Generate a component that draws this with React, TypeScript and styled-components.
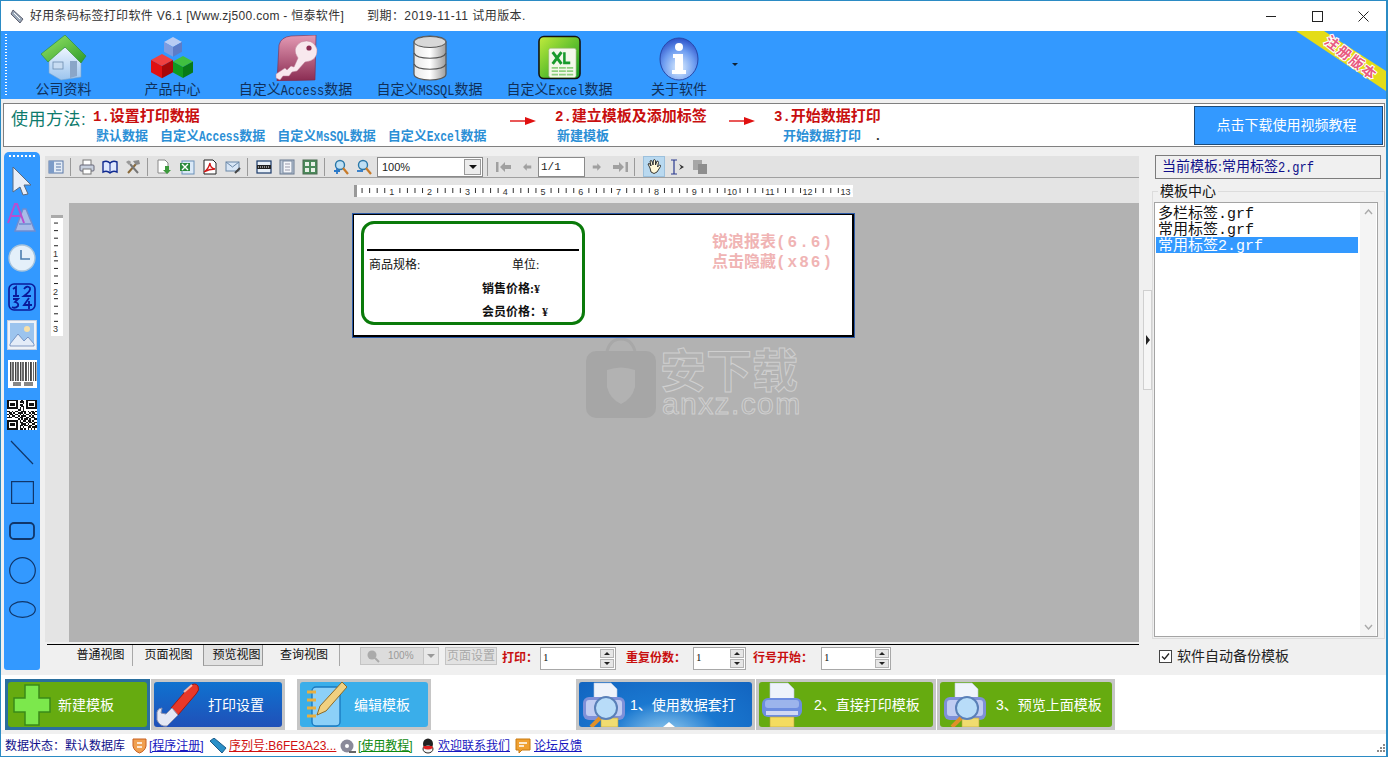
import React from "react";
import styled, { createGlobalStyle } from "styled-components";

const Global = createGlobalStyle`
  html, body { margin: 0; padding: 0; overflow: hidden; background: #fff; }
  * { box-sizing: border-box; }
  body { font-family: "Noto Sans CJK SC", "Noto Sans", sans-serif; }
`;
const CJK = `"Liberation Serif", "Noto Sans CJK SC", serif`;
const Sans = `"Liberation Sans", "Noto Sans CJK SC", sans-serif`;

const Win = styled.div`
  width: 1388px; height: 757px; display: flex; flex-direction: column;
  border: 1px solid #2b8bc4; border-right-width: 2px; background: #f0f0f0; overflow: hidden;
`;
const TitleBar = styled.div`
  height: 30px; flex: none; display: flex; align-items: center; background: #fff;
  padding-left: 9px; font: 12px/16px ${Sans}; color: #333; white-space: pre;
`;
const TitleIcon = styled.svg`width: 15px; height: 15px; margin-right: 5px; flex: none;`;
const TitleText = styled.span`width: 337px; flex: none; letter-spacing: 0.3px;`;
const TitleExpiry = styled.span`letter-spacing: 0.45px;`;
const WinControls = styled.div`margin-left: auto; display: flex; height: 30px;`;
const WinBtn = styled.div`width: 46px; display: flex; align-items: center; justify-content: center;`;

const TopBar = styled.div`
  height: 68px; flex: none; background: #3399ff; position: relative; display: flex; align-items: flex-start;
  padding-left: 2px;
`;
const Grip = styled.div`
  width: 2px; height: 62px; margin: 3px 0 0 2px; flex: none;
  background: repeating-linear-gradient(to bottom, #fff 0 1px, transparent 1px 3px);
`;
const TopItem = styled.div<{ $w: number }>`
  width: ${(p) => p.$w}px; flex: none; height: 68px; display: flex; flex-direction: column; align-items: center;
  font: 14px/16px ${CJK}; color: #10305a; white-space: nowrap; padding-top: 3px;
`;
const TopIconBox = styled.div`height: 47px; display: flex; align-items: flex-end; justify-content: center;`;
const TopLabel = styled.div`margin-top: 1px;`;
const DropArrow = styled.div`
  margin: 32px 0 0 0; width: 0; height: 0; flex: none;
  border-left: 3px solid transparent; border-right: 3px solid transparent; border-top: 3px solid #123;
`;
const Ribbon = styled.svg`position: absolute; right: 0; top: 0; width: 90px; height: 68px;`;

const HelpWrap = styled.div`height: 51px; flex: none; padding: 4px 1px 3px 2px;`;
const HelpBox = styled.div`
  height: 44px; border: 1px solid #808080; background: #fff; display: flex; position: relative; padding-right: 1px;
`;
const HelpTitle = styled.div`
  width: 89px; flex: none; padding: 5px 0 0 7px; font: 17px/22px ${Sans}; color: #0d7a6c; letter-spacing: 0.5px; white-space: nowrap;
`;
const Step = styled.div<{ $w: number }>`width: ${(p) => p.$w}px; flex: none; display: flex; flex-direction: column; padding-top: 3px;`;
const StepHead = styled.div`font: bold 15px/18px ${CJK}; color: #c80f0f; white-space: nowrap; height: 18px;`;
const StepNum = styled.span`font-family: "Liberation Mono", monospace; font-size: 14px;`;
const StepLinks = styled.div<{ $pl: number }>`
  display: flex; gap: 12px; padding-left: ${(p) => p.$pl}px; margin-top: 3px; height: 16px;
  font: bold 13px/16px ${CJK}; color: #2b8fd6; white-space: nowrap;
`;
const Arrow = styled.svg<{ $w: number }>`width: ${(p) => p.$w}px; height: 44px; flex: none;`;
const VideoBtn = styled.div`
  margin: 2px 0 0 auto; width: 189px; height: 39px; background: #3399ff; border: 1px solid #1c4a78;
  color: #fff; font: 14px/37px ${Sans}; text-align: center; padding-right: 4px;
`;
const Dot = styled.b`color: #222;`;

const Main = styled.div`height: 525px; flex: none; display: flex; background: #f0f0f0; position: relative;`;
const LeftBar = styled.div`
  width: 36px; height: 518px; margin: 2px 0 0 3px; flex: none; background: #3399ff; border-radius: 5px 5px 3px 3px;
  display: flex; flex-direction: column; align-items: center; position: relative;
`;
const DotRow = styled.div`
  position: absolute; left: 5px; top: 3px; width: 26px; height: 2px;
  background: repeating-linear-gradient(to right, #fff 0 2px, transparent 2px 4px);
`;
const LeftIcon = styled.div<{ $h: number }>`
  height: ${(p) => p.$h}px; width: 36px; display: flex; align-items: center; justify-content: center; flex: none;
`;
const Center = styled.div`width: 1094px; margin-left: 5px; flex: none; display: flex; flex-direction: column; padding-top: 6px;`;
const ToolRow = styled.div`
  height: 22px; flex: none; background: #e2e2e2; border-bottom: 1px solid #a0a0a0; display: flex; align-items: center; padding-left: 3px;
`;
const Tool = styled.div<{ $w?: number; $mr?: number }>`
  width: ${(p) => p.$w ?? 16}px; margin-right: ${(p) => p.$mr ?? 7}px; height: 16px; flex: none; display: flex; align-items: center; justify-content: center;
`;
const ToolSep = styled.div`width: 1px; height: 18px; background: #9a9a9a; flex: none; margin-right: 8px;`;
const Combo = styled.div`
  width: 106px; height: 20px; flex: none; background: #fff; border: 1px solid #8a8a8a; display: flex; align-items: center;
  justify-content: space-between; font: 11px/16px ${Sans}; color: #222; padding: 0 1px 0 4px; margin-right: 4px;
`;
const ComboBtn = styled.div`
  width: 17px; height: 16px; background: #ececec; border: 1px solid #999; display: flex; align-items: center; justify-content: center;
`;
const Tri = styled.div`width: 0; height: 0; border-left: 4px solid transparent; border-right: 4px solid transparent; border-top: 4px solid #111;`;
const PageInput = styled.div`
  width: 47px; height: 20px; background: #fff; border: 1px solid #8a8a8a; font: 11px/18px "Liberation Mono", monospace; color: #222; padding-left: 2px; flex: none; margin-right: 7px;
`;
const HandBtn = styled.div`
  width: 22px; height: 21px; background: #b9d9f0; border: 1px solid #9cc0dc; flex: none; margin-right: 4px; display: flex; align-items: center; justify-content: center;
`;
const RulerRow = styled.div`height: 25px; flex: none; background: #e4e4e4; padding: 7px 0 0 309px;`;
const RulerH = styled.svg`width: 499px; height: 12px; display: block; background: #fff;`;
const CanvasRow = styled.div`height: 439px; flex: none; display: flex;`;
const RulerCol = styled.div`width: 24px; flex: none; background: #e4e4e4; padding: 12px 0 0 6px;`;
const RulerV = styled.svg`width: 12px; height: 121px; display: block; background: #fff;`;
const Canvas = styled.div`flex: 1; background: #b2b2b2; position: relative;`;
const Paper = styled.div`
  position: absolute; left: 284px; top: 11px; width: 501px; height: 123px; background: #fff;
  border: 2px solid #000; border-left-width: 1px; border-top-width: 1px; outline: 1px solid #2b5aa8;
`;
const LabelBox = styled.div`
  position: absolute; left: 7px; top: 6px; width: 224px; height: 104px; border: 3px solid #0a7a0a; border-radius: 13px;
`;
const LabelRule = styled.div`position: absolute; left: 3px; top: 25px; width: 212px; height: 2px; background: #000;`;
const LabelText = styled.div<{ $x: number; $y: number; $b?: boolean }>`
  position: absolute; left: ${(p) => p.$x}px; top: ${(p) => p.$y}px; font: ${(p) => (p.$b ? "bold" : "normal")} 12px/16px ${CJK};
  color: #111; white-space: nowrap;
`;
const PinkNote = styled.div`
  position: absolute; left: 358px; top: 15px; font: bold 16px/20px "Noto Sans CJK SC", sans-serif; color: #f0b4b4; white-space: nowrap;
`;
const PinkLine = styled.div`height: 20px;`;
const PinkLat = styled.span`font-family: "Liberation Mono", monospace; letter-spacing: 2px; line-height: 1;`;
const Mark = styled.div`position: absolute; left: 517px; top: 134px; display: flex; gap: 4px;`;
const MarkText = styled.div`display: flex; flex-direction: column; padding-top: 6px;`;
const MarkCn = styled.div`
  font: bold 46px/48px "Noto Sans CJK SC", sans-serif; color: transparent; -webkit-text-stroke: 1px #cfcfcf; white-space: nowrap; height: 48px;
`;
const MarkEn = styled.div`
  font: 30px/26px "Liberation Sans", sans-serif; color: transparent; -webkit-text-stroke: 1px #cfcfcf; letter-spacing: 1.4px; margin-left: 2px;
`;
const BottomLine = styled.div`height: 1px; background: #000; margin: 2px 0 0 2px; flex: none;`;
const TabRow = styled.div`height: 26px; flex: none; display: flex; align-items: flex-start; padding-left: 2px;`;
const TabItem = styled.div<{ $w: number; $raised?: boolean; $sep?: boolean }>`
  width: ${(p) => p.$w}px; height: 21px; flex: none; text-align: center; font: 12px/21px ${Sans}; color: #111;
  background: ${(p) => (p.$raised ? "#e2e2e2" : "transparent")};
  border-right: 1px solid ${(p) => (p.$sep ? "#a8a8a8" : "transparent")};
  ${(p) => p.$sep && "padding-right: 3px;"}
  ${(p) => p.$raised && "border-left: 1px solid #999; border-right: 1px solid #999; border-bottom: 1px solid #aaa; padding-left: 7px;"}
`;
const TabSpacer = styled.div<{ $w: number }>`width: ${(p) => p.$w}px; flex: none;`;
const GhostCombo = styled.div`
  width: 79px; height: 18px; margin-top: 2px; flex: none; background: #dcdcdc; border: 1px solid #c4c4c4; display: flex; align-items: center;
  font: 10px/16px ${Sans}; color: #999; gap: 8px; padding-left: 5px;
`;
const GhostArrow = styled.div`
  margin-left: auto; width: 15px; height: 16px; background: #e8e8e8; border-left: 1px solid #c4c4c4; display: flex; align-items: center; justify-content: center;
`;
const GhostTri = styled.div`width: 0; height: 0; border-left: 4px solid transparent; border-right: 4px solid transparent; border-top: 4px solid #999;`;
const GhostBtn = styled.div`
  width: 52px; height: 18px; margin: 2px 5px 0 6px; flex: none; background: #e2e2e2; border: 1px solid #c4c4c4; font: 12px/16px ${Sans}; color: #aaa; text-align: center; white-space: nowrap; overflow: hidden;
`;
const RedLabel = styled.div<{ $w: number }>`
  width: ${(p) => p.$w}px; flex: none; margin-top: 4px; font: bold 12px/18px ${Sans}; color: #c80f0f; white-space: nowrap;
`;
const Spin = styled.div<{ $w: number }>`
  width: ${(p) => p.$w}px; height: 23px; margin-top: 2px; flex: none; background: #fff; border: 1px solid #a8a8a8; display: flex; justify-content: space-between;
  font: 11px/17px "Liberation Serif", serif; color: #111; padding: 1px 1px 1px 2px;
`;
const SpinBtns = styled.div`width: 14px; display: flex; flex-direction: column; gap: 1px; flex: none;`;
const SpinBtn = styled.div`flex: 1; background: #e6e6e6; border: 1px solid #b4b4b4; display: flex; align-items: center; justify-content: center;`;
const TriS = styled.div<{ $up?: boolean }>`
  width: 0; height: 0; border-left: 3px solid transparent; border-right: 3px solid transparent;
  ${(p) => (p.$up ? "border-bottom: 3px solid #222;" : "border-top: 3px solid #222;")}
`;

const Splitter = styled.div`
  width: 9px; height: 100px; margin: 140px 0 0 4px; flex: none; background: #f6f6f6; border: 1px solid #d0d0d0; display: flex; align-items: center; justify-content: center;
`;
const SplitTri = styled.div`width: 0; height: 0; border-top: 5px solid transparent; border-bottom: 5px solid transparent; border-left: 4px solid #222;`;
const Right = styled.div`width: 233px; flex: none; display: flex; flex-direction: column; padding: 5px 0 0 0;`;
const CurBox = styled.div`
  width: 226px; height: 24px; margin-left: 3px; border: 1px solid #7c7c7c; font: 14px/22px ${CJK}; color: #10108a; padding-left: 6px; flex: none; white-space: nowrap;
`;
const Group = styled.div`
  margin-top: 12px; width: 233px; height: 448px; border: 1px solid #dcdcdc; padding: 10px 6px 0 1px; position: relative; flex: none;
`;
const Legend = styled.div`
  position: absolute; left: 5px; top: -9px; background: #f0f0f0; padding: 0 2px; font: 14px/16px ${Sans}; color: #111;
`;
const ListBox = styled.div`
  width: 224px; height: 435px; background: #fff; border: 1px solid #a4a4a4; display: flex; padding-top: 2px;
`;
const ListCol = styled.div`width: 202px; flex: none; margin-left: 1px;`;
const ListItem = styled.div<{ $sel?: boolean }>`
  height: 16px; font: 15px/19px "Liberation Mono", "Noto Sans CJK SC", monospace; padding-left: 2px; color: ${(p) => (p.$sel ? "#fff" : "#111")};
  background: ${(p) => (p.$sel ? "#3399ff" : "transparent")}; white-space: nowrap;
`;
const ScrollTrack = styled.div`
  width: 16px; margin: -2px 1px 0 auto; background: #f4f4f4; display: flex; flex-direction: column; justify-content: space-between; align-items: center; padding: 6px 0;
`;
const Chevron = styled.svg`width: 9px; height: 6px; display: block;`;
const CheckRow = styled.div`
  display: flex; align-items: center; gap: 5px; margin: 8px 0 0 7px; font: 14px/18px ${Sans}; color: #222; flex: none;
`;
const CheckBox = styled.div`width: 13px; height: 13px; background: #fff; border: 1px solid #444; display: flex; align-items: center; justify-content: center;`;

const BtnRow = styled.div`height: 55px; flex: none; background: #fff; display: flex; padding: 4px 0 0 4px;`;
const BigBtn = styled.div<{ $w: number; $ml?: number; $sel?: boolean }>`
  width: ${(p) => p.$w}px; height: 51px; margin-left: ${(p) => p.$ml ?? 0}px; flex: none;
  background: ${(p) => (p.$sel ? "#2a6f9e" : "#c6c6c6")}; padding: 3px; display: flex;
`;
const BigFill = styled.div<{ $bg: string; $pl: number; $gap: number }>`
  flex: 1; background: ${(p) => p.$bg}; border-radius: 3px; display: flex; align-items: center; position: relative; overflow: hidden;
  padding-left: ${(p) => p.$pl}px; gap: ${(p) => p.$gap}px; color: #fff; font: 14px/18px ${Sans}; white-space: nowrap;
`;
const ActiveTick = styled.div`
  position: absolute; left: 50%; bottom: 0; margin-left: -3px; width: 0; height: 0;
  border-left: 6px solid transparent; border-right: 6px solid transparent; border-bottom: 5px solid #fff;
`;
const BigIcon = styled.svg<{ $w: number }>`width: ${(p) => p.$w}px; height: 45px; flex: none;`;
const Gap = styled.div`height: 4px; flex: none; background: #f0f0f0;`;
const Status = styled.div`
  height: 22px; flex: none; background: #fff; display: flex; align-items: center; font: 12px/16px ${Sans}; padding: 1px 0 0 4px; position: relative; white-space: nowrap;
`;
const StatusText = styled.span<{ $c: string; $u?: boolean; $w: number }>`
  color: ${(p) => p.$c}; text-decoration: ${(p) => (p.$u ? "underline" : "none")}; width: ${(p) => p.$w}px; flex: none;
`;
const StatusIcon = styled.svg<{ $w: number }>`width: ${(p) => p.$w}px; height: 16px; flex: none;`;
const ResizeGrip = styled.svg`position: absolute; right: 0; bottom: 1px; width: 12px; height: 12px;`;

const Lat = styled.span`
  font-family: "Liberation Mono", monospace; font-size: 0.86em; line-height: 1; display: inline-block; transform: scaleY(1.25);
`;

const HomeIcon = () => (
  <svg width="47" height="46" viewBox="0 0 47 46">
    <defs>
      <linearGradient id="wall" x1="0" y1="0" x2="0" y2="1"><stop offset="0" stopColor="#eef6ff" /><stop offset="1" stopColor="#9cc4ee" /></linearGradient>
      <linearGradient id="roof" x1="0" y1="0" x2="1" y2="1"><stop offset="0" stopColor="#9ae868" /><stop offset="1" stopColor="#2e9a2a" /></linearGradient>
    </defs>
    <path d="M9 20 L26 12 L41 20 L41 42 L21 45 L9 38Z" fill="url(#wall)" stroke="#7aa4cc" strokeWidth=".6" />
    <path d="M1 19 L25 0 L46 21 L41 28 L25 12 L8 27Z" fill="url(#roof)" stroke="#2a8a2a" strokeWidth=".6" />
    <path d="M30 26 h7 v15 l-7 2z" fill="#8aa6c8" />
    <rect x="13" y="27" width="10" height="7" fill="#c8dcf2" stroke="#6c8cb0" strokeWidth=".8" />
  </svg>
);
const Cube = ({ x, y, s, a, b, c }: { x: number; y: number; s: number; a: string; b: string; c: string }) => (
  <g transform={`translate(${x} ${y})`}>
    <path d={`M${s} 0 L${2 * s} ${s * 0.55} L${s} ${s * 1.1} L0 ${s * 0.55}Z`} fill={a} />
    <path d={`M0 ${s * 0.55} L${s} ${s * 1.1} V${s * 2.2} L0 ${s * 1.65}Z`} fill={b} />
    <path d={`M${2 * s} ${s * 0.55} L${s} ${s * 1.1} V${s * 2.2} L${2 * s} ${s * 1.65}Z`} fill={c} />
  </g>
);
const CubesIcon = () => (
  <svg width="44" height="44" viewBox="0 0 44 44">
    <Cube x={13} y={0} s={9} a="#b8ccf4" b="#7e9ce0" c="#5c7cc8" />
    <Cube x={0} y={17} s={11} a="#f04040" b="#e01010" c="#a80808" />
    <Cube x={22} y={19} s={10} a="#40c040" b="#109a20" c="#087a18" />
  </svg>
);
const AccessIcon = () => (
  <svg width="46" height="46" viewBox="0 0 46 46">
    <defs><linearGradient id="acc" x1="0" y1="0" x2="0" y2="1"><stop offset="0" stopColor="#e49ab4" /><stop offset="1" stopColor="#8a2c52" /></linearGradient></defs>
    <path d="M6 10 Q8 2 18 1 L43 0 L42 45 L4 46 Z" fill="url(#acc)" stroke="#7c2c4c" strokeWidth=".6" />
    <path d="M3 43 L3 39 L12 33 L14 35 L18 31 L21 32 L25 23 Q18 13 28 7 Q40 3 44 14 Q45 26 32 27 L24 36 L19 37 L16 41 L10 41 L7 45Z" fill="#f8e8ee" stroke="#b87a94" strokeWidth=".5" />
    <circle cx="36" cy="13" r="2.6" fill="#8a2c52" />
  </svg>
);
const DbIcon = () => (
  <svg width="36" height="46" viewBox="0 0 36 46">
    <defs><linearGradient id="db" x1="0" y1="0" x2="1" y2="0"><stop offset="0" stopColor="#e8e8e8" /><stop offset=".5" stopColor="#fff" /><stop offset="1" stopColor="#9c9c9c" /></linearGradient></defs>
    <path d="M2 7 C2 -1 34 -1 34 7 V39 C34 47 2 47 2 39Z" fill="url(#db)" stroke="#555" strokeWidth="1.2" />
    <ellipse cx="18" cy="7" rx="16" ry="5.5" fill="#d8d8d8" stroke="#555" />
    <path d="M2 18 C5 25 31 25 34 18 M2 29 C5 36 31 36 34 29" fill="none" stroke="#555" strokeWidth="1.2" />
  </svg>
);
const ExcelIcon = () => (
  <svg width="43" height="46" viewBox="0 0 44 46">
    <defs><linearGradient id="xl" x1="0" y1="0" x2="1" y2="1"><stop offset="0" stopColor="#c2ec3c" /><stop offset="1" stopColor="#0d9a20" /></linearGradient></defs>
    <rect x="1" y="1" width="42" height="43" rx="5" fill="url(#xl)" stroke="#111" strokeWidth="1.6" />
    <rect x="11" y="13" width="28" height="30" rx="2" fill="#f4f8ea" stroke="#98b078" strokeWidth=".6" />
    <path d="M15 17 L24 29 M24 17 L15 29" stroke="#199a2c" strokeWidth="3" />
    <path d="M27 17 V28 H33" stroke="#199a2c" strokeWidth="2.6" fill="none" />
    <path d="M14 33 H36 M14 36.5 H36 M14 40 H36" stroke="#8ed080" strokeWidth="1.8" />
    <path d="M21 31 V42 M29 31 V42" stroke="#f4f8ea" strokeWidth="1" />
  </svg>
);
const InfoIcon = () => (
  <svg width="40" height="44" viewBox="0 0 40 44">
    <defs><radialGradient id="inf" cx=".5" cy=".7" r=".7"><stop offset="0" stopColor="#dff0ff" /><stop offset=".6" stopColor="#6d9cf0" /><stop offset="1" stopColor="#2b50c8" /></radialGradient></defs>
    <ellipse cx="20" cy="22" rx="19" ry="21" fill="url(#inf)" stroke="#2848a8" />
    <circle cx="20" cy="10" r="4" fill="#fff" />
    <path d="M14 17 H24 V33 H27 V37 H13 V33 H16 V21 H14Z" fill="#fff" />
  </svg>
);

const S16 = ({ children }: { children: React.ReactNode }) => <svg width="16" height="16" viewBox="0 0 16 16">{children}</svg>;
const TPanel = () => <S16><rect x="1" y="2" width="14" height="12" fill="#e4ecf6" stroke="#5a78a8" /><rect x="1" y="2" width="5" height="12" fill="#7d9cc8" /><path d="M8 5 h5 M8 8 h5 M8 11 h5" stroke="#5a78a8" /></S16>;
const TPrint = () => <S16><rect x="4" y="1" width="8" height="6" fill="#fff" stroke="#777" /><rect x="1" y="6" width="14" height="6" rx="1" fill="#c8d0de" stroke="#667" /><rect x="4" y="10" width="8" height="5" fill="#fff" stroke="#777" /></S16>;
const TBook = () => <S16><path d="M1 3 Q5 1 8 4 Q11 1 15 3 V13 Q11 11 8 14 Q5 11 1 13Z" fill="#dfe8ff" stroke="#102a90" strokeWidth="1.4" /><path d="M8 4 V14" stroke="#102a90" /></S16>;
const TTools = () => <S16><path d="M3 14 L11 5" stroke="#8a6a3a" strokeWidth="2" /><path d="M13 14 L5 5" stroke="#777" strokeWidth="2" /><path d="M8 2 L14 1 L15 5 L11 6Z" fill="#8a8a8a" /><path d="M1 3 Q4 0 6 3 L4 6Z" fill="#999" /></S16>;
const TDocDown = () => <S16><path d="M2 1 H9 L12 4 V14 H2Z" fill="#fff" stroke="#888" /><path d="M9 7 H13 V11 H15 L11 15 L7 11 H9Z" fill="#3d9a3d" /></S16>;
const TExcel = () => <S16><rect x="3" y="2" width="12" height="13" fill="#dbe9f7" stroke="#6a90b8" /><path d="M1 4 H11 V12 H1Z" fill="#2a8a3c" /><path d="M3 5 L9 11 M9 5 L3 11" stroke="#fff" strokeWidth="1.4" /></S16>;
const TPdf = () => <S16><path d="M2 1 H11 L14 4 V15 H2Z" fill="#fff" stroke="#222" /><path d="M2 13 Q6 11 8 4 Q8 9 13 10 Q7 10 2 13Z" fill="none" stroke="#d01818" strokeWidth="1.3" /></S16>;
const TMail = () => <S16><rect x="1" y="3" width="13" height="9" fill="#d8e6f6" stroke="#6a88a8" /><path d="M1 3 L7.5 8 L14 3" fill="none" stroke="#6a88a8" /><path d="M10 14 L15 9" stroke="#444" strokeWidth="2" /></S16>;
const TFilm = () => <S16><rect x="1" y="2" width="14" height="12" fill="#e8f0f8" stroke="#1a3a6a" strokeWidth="1.2" /><rect x="1" y="6" width="14" height="4" fill="#222" /><path d="M2 8 h12" stroke="#fff" strokeDasharray="1 1" /></S16>;
const TPage = () => <S16><rect x="1" y="1" width="14" height="14" fill="#bcc8d8" stroke="#6a7a90" /><rect x="4" y="2" width="9" height="12" fill="#f4f6fa" stroke="#7a8aa0" /><path d="M6 5 h5 M6 8 h5 M6 11 h5" stroke="#99a" /></S16>;
const TGrid = () => <S16><rect x="1" y="1" width="14" height="14" fill="#4a8a5a" stroke="#4a6a50" /><rect x="3" y="3" width="4" height="4" fill="#e8f0e8" /><rect x="9" y="3" width="4" height="4" fill="#e8f0e8" /><rect x="3" y="9" width="4" height="4" fill="#e8f0e8" /><rect x="9" y="9" width="4" height="4" fill="#e8f0e8" /></S16>;
const TZoom = ({ plus }: { plus?: boolean }) => <S16><circle cx="7" cy="6" r="4.5" fill="#bfe0f4" stroke="#2a78a8" strokeWidth="1.4" /><path d="M10 9 L15 15" stroke="#c87a28" strokeWidth="2.2" /><path d={plus ? "M1 12 H7 M4 9 V15" : "M1 12 H7"} stroke="#2a78c8" strokeWidth="1.8" /></S16>;
const TNav = ({ dir, end }: { dir: "l" | "r"; end?: boolean }) => (
  <svg width="16" height="12" viewBox="0 0 16 12" fill="#a0a0a0">
    {dir === "l" ? (<>{end && <rect x="0" y="1" width="2.5" height="10" />}<path d="M4 6 L9 1 V4 H15 V8 H9 V11Z" /></>) : (<>{end && <rect x="13.5" y="1" width="2.5" height="10" />}<path d="M12 6 L7 1 V4 H1 V8 H7 V11Z" /></>)}
  </svg>
);
const THand = () => <S16><path d="M4 9 L2 5 Q3 4 4 5 L5 7 L4 2 Q5 1 6 2 L7 6 L7.5 1 Q9 0 9.5 1.5 L9.5 6 L11 2 Q12.5 2 12.5 3.5 L11.5 8 L13.5 6 Q15 6 14.5 7.5 L11 13 Q8 16 5 13Z" fill="#fff8d8" stroke="#222" strokeWidth=".9" /></S16>;
const TCursor = () => <S16><path d="M2 1 H8 M2 15 H8 M5 1 V15" stroke="#2a3a90" strokeWidth="1.2" /><path d="M10 5 L15 8 L10 11 L12 8Z" fill="#333" /></S16>;
const TCopy = () => <S16><rect x="1" y="1" width="9" height="10" fill="#a6a6a6" /><rect x="6" y="5" width="9" height="10" fill="#8e8e8e" /></S16>;

const LArrow = () => <svg width="24" height="30" viewBox="0 0 24 30"><path d="M3 1 L21 19 L14 19 L18 28 L13 29 L10 21 L3 26Z" fill="#e8eef8" stroke="#5a6a80" strokeWidth="1" /></svg>;
const LAA = () => (
  <svg width="30" height="30" viewBox="0 0 30 30" fill="none">
    <path d="M8 28 L16 6 H19 L28 28 Z M12 21 H24" fill="#a8bce8" stroke="#6f8cd0" strokeWidth="1.4" />
    <path d="M1 20 L8 1 H10 L17 20 M4 13 H14" stroke="#b84ed0" strokeWidth="2" />
  </svg>
);
const LClock = () => <svg width="28" height="28" viewBox="0 0 28 28"><circle cx="14" cy="14" r="13" fill="#e4f0fa" stroke="#a8c4dc" strokeWidth="1.4" /><path d="M13 6 V15 H22" fill="none" stroke="#4a7eb0" strokeWidth="1.6" /></svg>;
const LNums = () => (
  <svg width="28" height="28" viewBox="0 0 28 28">
    <rect x="1" y="1" width="26" height="26" rx="5" fill="none" stroke="#0a1a9a" strokeWidth="1.6" />
    <g fill="none" stroke="#0a1a9a" strokeWidth="1.8">
      <path d="M5 6 L8 4 V13 M5 13 H11" />
      <path d="M16 6 Q19 2 22 5 Q23 8 16 13 H23" />
      <path d="M5 16 H10 L7 19 Q11 20 10 23 Q7 26 4 24" />
      <path d="M21 15 L16 22 H24 M21 18 V26" />
    </g>
  </svg>
);
const LImage = () => (
  <svg width="30" height="30" viewBox="0 0 30 30">
    <rect x=".5" y=".5" width="29" height="29" fill="#eef2f8" stroke="#c4cede" />
    <rect x="3" y="3" width="24" height="23" fill="#9cc4ee" />
    <circle cx="20" cy="9" r="3" fill="#f8e0a8" />
    <path d="M3 24 L11 14 L17 21 L21 17 L27 24 V26 H3Z" fill="#e4ecf8" stroke="#5a7ab0" strokeWidth=".7" />
  </svg>
);
const bars = [0, 2, 3, 5, 7, 8, 10, 12, 13, 15, 16, 18, 20, 21, 23, 25];
const LBar = () => (
  <svg width="29" height="28" viewBox="0 0 29 28">
    <rect width="29" height="28" fill="#fff" />
    {bars.map((b, i) => <rect key={i} x={2 + b} y="2" width={i % 3 === 0 ? 1.4 : 0.8} height="19" fill="#444" />)}
    <rect x="5" y="22" width="8" height="4" fill="#888" /><rect x="16" y="22" width="9" height="4" fill="#888" />
  </svg>
);
const qr = ["1111111001001111111","1000001011101000001","1011101000101011101","1011101011001011101","1000001001101000001","1111111010101111111","0000000110100000000","1101011001110101101","0110100111010010110","1011011010101101011","0101100101110010100","1110011011001101110","0000000101011010011","1111111010110110100","1000001011001011011","1011101001110100110","1011101011011011001","1000001010100110111","1111111011010101010"];
const LQr = () => (
  <svg width="30" height="31" viewBox="0 0 19 19" shapeRendering="crispEdges">
    <rect width="19" height="19" fill="#fff" />
    {qr.flatMap((r, y) => r.split("").map((c, x) => (c === "1" ? <rect key={`${x}-${y}`} x={x} y={y} width="1" height="1" fill="#111" /> : null)))}
  </svg>
);
const shape = { fill: "none", stroke: "#10366a", strokeWidth: 1.2 };
const LLine = () => <svg width="24" height="25" viewBox="0 0 24 25"><path d="M1 1 L23 24" {...shape} /></svg>;
const LSquare = () => <svg width="23" height="23" viewBox="0 0 23 23"><rect x=".6" y=".6" width="21.8" height="21.8" {...shape} /></svg>;
const LRound = () => <svg width="26" height="18" viewBox="0 0 26 18"><rect x="1" y="1" width="24" height="16" rx="4" {...shape} strokeWidth={1.8} /></svg>;
const LCircle = () => <svg width="27" height="27" viewBox="0 0 27 27"><circle cx="13.5" cy="13.5" r="12.8" {...shape} /></svg>;
const LEllipse = () => <svg width="27" height="17" viewBox="0 0 27 17"><ellipse cx="13.5" cy="8.5" rx="12.8" ry="7.8" {...shape} /></svg>;

const Ticks = ({ vertical }: { vertical?: boolean }) => {
  const out: React.ReactNode[] = [];
  for (let i = 1; i <= 66; i++) {
    const p = i * 7.56;
    if (i % 5 === 0) continue;
    if (vertical && p > 120) continue;
    out.push(vertical
      ? <rect key={i} x="3" y={p} width="4" height="1" fill="#222" />
      : <rect key={i} x={p} y="3" width="1" height="5" fill="#333" />);
  }
  for (let n = 1; n <= 13; n++) {
    const p = n * 37.8;
    if (vertical && n > 3) break;
    out.push(vertical
      ? <text key={`n${n}`} x="2" y={p + 4} fontSize="9" fontFamily="Liberation Sans" fill="#333">{n}</text>
      : <text key={`n${n}`} x={p} y="9.5" textAnchor="middle" fontSize="9" fontFamily="Liberation Sans" fill="#333">{n}</text>);
  }
  return <>{out}</>;
};

const PrinterPreview = () => (
  <BigIcon $w={46} viewBox="0 0 46 45">
    <path d="M13 1 H30 L36 7 V20 H13Z" fill="#eef3fb" stroke="#b8c8dc" strokeWidth=".6" />
    <rect x="2" y="15" width="42" height="23" rx="6" fill="#7f90d8" />
    <rect x="5" y="18" width="36" height="16" rx="3" fill="#c0ccf2" />
    <rect x="20" y="36" width="17" height="9" fill="#f0dc70" stroke="#b8a040" strokeWidth=".6" />
    <ellipse cx="25" cy="26" rx="11" ry="11" fill="#b8dcf8" stroke="#5a80b8" strokeWidth="2" />
    <path d="M19 36 L10 45" stroke="#e09028" strokeWidth="4" />
  </BigIcon>
);
const Printer = () => (
  <BigIcon $w={46} viewBox="0 0 46 45">
    <path d="M11 1 H29 L35 7 V21 H11Z" fill="#eef3fb" stroke="#b8c8dc" strokeWidth=".6" />
    <rect x="3" y="16" width="40" height="19" rx="6" fill="#6d8de0" />
    <rect x="6" y="18" width="34" height="8" rx="3" fill="#9cb4ec" />
    <rect x="7" y="29" width="32" height="4" fill="#d0d8f4" />
    <rect x="11" y="35" width="24" height="10" fill="#f4dc60" stroke="#b8a040" strokeWidth=".6" />
  </BigIcon>
);

const Tops = () => {
  const tops = [
    { w: 113, i: <HomeIcon />, l: "公司资料" },
    { w: 105, i: <CubesIcon />, l: "产品中心" },
    { w: 141, i: <AccessIcon />, l: <>自定义<Lat>Access</Lat>数据</> },
    { w: 127, i: <DbIcon />, l: <>自定义<Lat>MSSQL</Lat>数据</> },
    { w: 133, i: <ExcelIcon />, l: <>自定义<Lat>Excel</Lat>数据</> },
    { w: 106, i: <InfoIcon />, l: "关于软件" },
  ];
  return (
    <>
      {tops.map((t, i) => (
        <TopItem key={i} $w={t.w}>
          <TopIconBox>{t.i}</TopIconBox>
          <TopLabel>{t.l}</TopLabel>
        </TopItem>
      ))}
    </>
  );
};

const SpinArrows = () => (
  <SpinBtns><SpinBtn><TriS $up /></SpinBtn><SpinBtn><TriS /></SpinBtn></SpinBtns>
);

const RedArrow = () => (
  <Arrow $w={45} viewBox="0 0 45 44"><path d="M0 17 H20" stroke="#e01010" strokeWidth="1.4" /><path d="M15 13 L26 17 L15 21Z" fill="#e01010" /></Arrow>
);

const App = () => (
  <Win>
    <Global />
    <TitleBar>
      <TitleIcon viewBox="0 0 15 15">
        <path d="M3 1 L13 10 L10 14 L1 5Z" fill="#9aa8b8" stroke="#445" strokeWidth=".8" />
        <path d="M4 4 L10 10" stroke="#fff" />
      </TitleIcon>
      <TitleText>好用条码标签打印软件 V6.1 [Www.zj500.com - 恒泰软件]</TitleText>
      <TitleExpiry>到期：2019-11-11 试用版本.</TitleExpiry>
      <WinControls>
        <WinBtn><svg width="11" height="11" viewBox="0 0 11 11"><path d="M0 5.5 H10" stroke="#222" /></svg></WinBtn>
        <WinBtn><svg width="11" height="11" viewBox="0 0 11 11"><rect x=".5" y=".5" width="10" height="10" fill="none" stroke="#222" /></svg></WinBtn>
        <WinBtn><svg width="11" height="11" viewBox="0 0 11 11"><path d="M.5 .5 L10.5 10.5 M10.5 .5 L.5 10.5" stroke="#222" /></svg></WinBtn>
      </WinControls>
    </TitleBar>

    <TopBar>
      <Grip />
      <Tops />
      <DropArrow />
      <Ribbon viewBox="0 0 90 68">
        <path d="M0 0 H28 L90 40 V60 Z" fill="#e4dc18" />
        <text x="55" y="32" textAnchor="middle" transform="rotate(38 55 27)" fontSize="14" fontWeight="bold" letterSpacing="1.5" fontFamily="Noto Sans CJK SC" fill="#e85a80" stroke="#fff" strokeWidth="2" paintOrder="stroke">注册版本</text>
      </Ribbon>
    </TopBar>

    <HelpWrap>
      <HelpBox>
        <HelpTitle>使用方法:</HelpTitle>
        <Step $w={417}>
          <StepHead><StepNum>1.</StepNum>设置打印数据</StepHead>
          <StepLinks $pl={3}>
            <span>默认数据</span>
            <span>自定义<Lat>Access</Lat>数据</span>
            <span>自定义<Lat>MsSQL</Lat>数据</span>
            <span>自定义<Lat>Excel</Lat>数据</span>
          </StepLinks>
        </Step>
        <RedArrow />
        <Step $w={174}>
          <StepHead><StepNum>2.</StepNum>建立模板及添加标签</StepHead>
          <StepLinks $pl={2}><span>新建模板</span></StepLinks>
        </Step>
        <RedArrow />
        <Step $w={200}>
          <StepHead><StepNum>3.</StepNum>开始数据打印</StepHead>
          <StepLinks $pl={9}><span>开始数据打印</span><span>&nbsp;<Dot>.</Dot></span></StepLinks>
        </Step>
        <VideoBtn>点击下载使用视频教程</VideoBtn>
      </HelpBox>
    </HelpWrap>

    <Main>
      <LeftBar>
        <DotRow />
        <LeftIcon $h={14} />
        <LeftIcon $h={30}><LArrow /></LeftIcon>
        <LeftIcon $h={44}><LAA /></LeftIcon>
        <LeftIcon $h={36}><LClock /></LeftIcon>
        <LeftIcon $h={42}><LNums /></LeftIcon>
        <LeftIcon $h={34}><LImage /></LeftIcon>
        <LeftIcon $h={44}><LBar /></LeftIcon>
        <LeftIcon $h={36}><LQr /></LeftIcon>
        <LeftIcon $h={40}><LLine /></LeftIcon>
        <LeftIcon $h={40}><LSquare /></LeftIcon>
        <LeftIcon $h={38}><LRound /></LeftIcon>
        <LeftIcon $h={40}><LCircle /></LeftIcon>
        <LeftIcon $h={38}><LEllipse /></LeftIcon>
      </LeftBar>
      <Center>
        <ToolRow>
          <Tool $mr={6}><TPanel /></Tool><ToolSep />
          <Tool><TPrint /></Tool><Tool><TBook /></Tool><Tool $mr={6}><TTools /></Tool><ToolSep />
          <Tool><TDocDown /></Tool><Tool><TExcel /></Tool><Tool><TPdf /></Tool><Tool $mr={6}><TMail /></Tool><ToolSep />
          <Tool><TFilm /></Tool><Tool><TPage /></Tool><Tool $mr={6}><TGrid /></Tool><ToolSep />
          <Tool><TZoom plus /></Tool><Tool $mr={5}><TZoom /></Tool>
          <Combo>100%<ComboBtn><Tri /></ComboBtn></Combo>
          <ToolSep />
          <Tool $mr={8}><TNav dir="l" end /></Tool><Tool $w={12} $mr={6}><TNav dir="l" /></Tool>
          <PageInput>1/1</PageInput>
          <Tool $w={12} $mr={8}><TNav dir="r" /></Tool><Tool $mr={6}><TNav dir="r" end /></Tool>
          <ToolSep />
          <HandBtn><THand /></HandBtn>
          <Tool $mr={7}><TCursor /></Tool><Tool><TCopy /></Tool>
        </ToolRow>
        <RulerRow>
          <RulerH viewBox="0 0 499 12"><rect x="0" y="0" width="3" height="12" fill="#999" /><Ticks /></RulerH>
        </RulerRow>
        <CanvasRow>
          <RulerCol>
            <RulerV viewBox="0 0 12 121"><rect width="12" height="3" fill="#aaa" /><Ticks vertical /></RulerV>
          </RulerCol>
          <Canvas>
            <Mark>
              <svg width="70" height="82" viewBox="0 0 70 82">
                <path d="M20 20 Q22 2 35 2 Q48 2 50 20" fill="none" stroke="#a8a8a8" strokeWidth="3" />
                <rect x="0" y="14" width="70" height="67" rx="10" fill="#a6a6a6" />
                <path d="M21 33 Q35 28 49 33 V50 Q46 62 35 67 Q24 62 21 50Z" fill="#b2b2b2" />
              </svg>
              <MarkText>
                <MarkCn>安下载</MarkCn>
                <MarkEn>anxz.com</MarkEn>
              </MarkText>
            </Mark>
            <Paper>
              <LabelBox>
                <LabelRule />
                <LabelText $x={5} $y={33}>商品规格:</LabelText>
                <LabelText $x={148} $y={33}>单位:</LabelText>
                <LabelText $x={118} $y={57} $b>销售价格:¥</LabelText>
                <LabelText $x={118} $y={80} $b>会员价格：¥</LabelText>
              </LabelBox>
              <PinkNote>
                <PinkLine>锐浪报表<PinkLat>(6.6)</PinkLat></PinkLine>
                <PinkLine>点击隐藏<PinkLat>(x86)</PinkLat></PinkLine>
              </PinkNote>
            </Paper>
          </Canvas>
        </CanvasRow>
        <BottomLine />
        <TabRow>
          <TabSpacer $w={25} />
          <TabItem $w={61} $sep>普通视图</TabItem>
          <TabSpacer $w={2} />
          <TabItem $w={68}>页面视图</TabItem>
          <TabSpacer $w={-1} />
          <TabItem $w={60} $raised>预览视图</TabItem>
          <TabSpacer $w={9} />
          <TabItem $w={68} $sep>查询视图</TabItem>
          <TabSpacer $w={20} />
          <GhostCombo>
            <svg width="14" height="14" viewBox="0 0 14 14"><circle cx="6" cy="6" r="4.5" fill="#aaa" /><path d="M9 9 L13 13" stroke="#aaa" strokeWidth="2" /></svg>
            100%
            <GhostArrow><GhostTri /></GhostArrow>
          </GhostCombo>
          <GhostBtn>页面设置</GhostBtn>
          <RedLabel $w={38}>打印：</RedLabel>
          <Spin $w={76}>1<SpinArrows /></Spin>
          <TabSpacer $w={10} />
          <RedLabel $w={67}>重复份数：</RedLabel>
          <Spin $w={53}>1<SpinArrows /></Spin>
          <TabSpacer $w={7} />
          <RedLabel $w={68}>行号开始：</RedLabel>
          <Spin $w={70}>1<SpinArrows /></Spin>
        </TabRow>
      </Center>
      <Splitter><SplitTri /></Splitter>
      <Right>
        <CurBox>当前模板:常用标签<Lat>2.grf</Lat></CurBox>
        <Group>
          <Legend>模板中心</Legend>
          <ListBox>
            <ListCol>
              <ListItem>多栏标签.grf</ListItem>
              <ListItem>常用标签.grf</ListItem>
              <ListItem $sel>常用标签2.grf</ListItem>
            </ListCol>
            <ScrollTrack>
              <Chevron viewBox="0 0 9 6"><path d="M1 5 L4.5 1 L8 5" fill="none" stroke="#aaa" strokeWidth="1.4" /></Chevron>
              <Chevron viewBox="0 0 9 6"><path d="M1 1 L4.5 5 L8 1" fill="none" stroke="#aaa" strokeWidth="1.4" /></Chevron>
            </ScrollTrack>
          </ListBox>
        </Group>
        <CheckRow>
          <CheckBox><svg width="11" height="11" viewBox="0 0 11 11"><path d="M2 5.5 L4.5 8 L9 2.5" fill="none" stroke="#222" strokeWidth="1.3" /></svg></CheckBox>
          软件自动备份模板
        </CheckRow>
      </Right>
    </Main>

    <BtnRow>
      <BigBtn $w={145} $sel>
        <BigFill $bg="#66ab10" $pl={5} $gap={7}>
          <BigIcon $w={38} viewBox="0 0 38 45"><path d="M12 3 H26 V16 H37 V30 H26 V43 H12 V30 H1 V16 H12Z" fill="#7ce84c" stroke="#3a8a18" strokeWidth="1.5" /></BigIcon>
          新建模板
        </BigFill>
      </BigBtn>
      <BigBtn $w={134} $ml={1}>
        <BigFill $bg="linear-gradient(#0f72d0,#2050b8)" $pl={0} $gap={9}>
          <BigIcon $w={45} viewBox="0 0 45 45">
            <path d="M17 26 L36 4 Q41 0 44 4 Q46 8 42 12 L24 33Z" fill="#e83828" stroke="#a01810" />
            <path d="M30 10 L38 3" stroke="#f8b8a8" strokeWidth="2" />
            <path d="M3 30 L3 38 Q6 45 13 44 L24 33 L18 26 L12 32 L7 31 L8 26 Q4 26 3 30Z" fill="#e4e8f4" stroke="#8890b0" />
          </BigIcon>
          打印设置
        </BigFill>
      </BigBtn>
      <BigBtn $w={134} $ml={12}>
        <BigFill $bg="#3aaeea" $pl={7} $gap={7}>
          <BigIcon $w={40} viewBox="0 0 40 45"><rect x="5" y="5" width="28" height="39" rx="4" fill="#8cd0f8" stroke="#1a7ac0" strokeWidth="1.4" /><path d="M0 10 h9 M0 18 h9 M0 26 h9 M0 34 h9" stroke="#e8b040" strokeWidth="3" /><path d="M35 0 L40 5 L19 29 L10 33 L13 24Z" fill="#f0d080" stroke="#8a6a28" /></BigIcon>
          编辑模板
        </BigFill>
      </BigBtn>
      <BigBtn $w={179} $ml={145}>
        <BigFill $bg="radial-gradient(ellipse at 50% 120%, #9cd0f0 0, #1a78d0 45%, #1264c0 100%)" $pl={2} $gap={3}>
          <PrinterPreview />
          1、使用数据套打
          <ActiveTick />
        </BigFill>
      </BigBtn>
      <BigBtn $w={180} $ml={1}>
        <BigFill $bg="#66ab10" $pl={0} $gap={9}>
          <Printer />
          2、直接打印模板
        </BigFill>
      </BigBtn>
      <BigBtn $w={178} $ml={1}>
        <BigFill $bg="#66ab10" $pl={2} $gap={8}>
          <PrinterPreview />
          3、预览上面模板
        </BigFill>
      </BigBtn>
    </BtnRow>
    <Gap />
    <Status>
      <StatusText $c="#10108a" $w={126}>数据状态：默认数据库</StatusText>
      <StatusIcon $w={18} viewBox="0 0 18 16"><path d="M2 1 H15 V8 Q14 13 8.500 15 Q3 13 2 8Z" fill="#f0a050" stroke="#c86020" /><path d="M6 5 H11 M6 9 H11" stroke="#fff" strokeWidth="1.5" /></StatusIcon>
      <StatusText $c="#1818c0" $u $w={60}>[程序注册]</StatusText>
      <StatusIcon $w={20} viewBox="0 0 20 16"><path d="M1 3 L5 0 L17 10 L13 15Z" fill="#2a90c8" stroke="#1a5a88" /></StatusIcon>
      <StatusText $c="#d01010" $u $w={110}>序列号:B6FE3A23...</StatusText>
      <StatusIcon $w={19} viewBox="0 0 19 16"><circle cx="8" cy="8" r="6.5" fill="#8a8a9a" /><circle cx="8" cy="8" r="2" fill="#fff" /><path d="M10 14 H17" stroke="#666" strokeWidth="2" /></StatusIcon>
      <StatusText $c="#108a10" $u $w={61}>[使用教程]</StatusText>
      <StatusIcon $w={19} viewBox="0 0 19 16"><ellipse cx="9" cy="6" rx="5" ry="5.500" fill="#222" /><ellipse cx="9" cy="11" rx="5" ry="4" fill="#f4f4f4" stroke="#222" /><path d="M4 10 Q9 13 14 10 L13 8 H5Z" fill="#e02020" /></StatusIcon>
      <StatusText $c="#1818c0" $u $w={76}>欢迎联系我们</StatusText>
      <StatusIcon $w={20} viewBox="0 0 20 16"><path d="M2 1 H16 V12 H8 L5 15 V12 H2Z" fill="#f0a030" stroke="#c87a10" /><path d="M5 5 H13 M5 8 H10" stroke="#fff" strokeWidth="1.4" /></StatusIcon>
      <StatusText $c="#1818c0" $u $w={50}>论坛反馈</StatusText>
      <ResizeGrip viewBox="0 0 12 12" fill="#8a8a8a"><rect x="9" y="1" width="2" height="2" /><rect x="6" y="4" width="2" height="2" /><rect x="9" y="4" width="2" height="2" /><rect x="3" y="7" width="2" height="2" /><rect x="6" y="7" width="2" height="2" /><rect x="9" y="7" width="2" height="2" /></ResizeGrip>
    </Status>
  </Win>
);

export default App;
